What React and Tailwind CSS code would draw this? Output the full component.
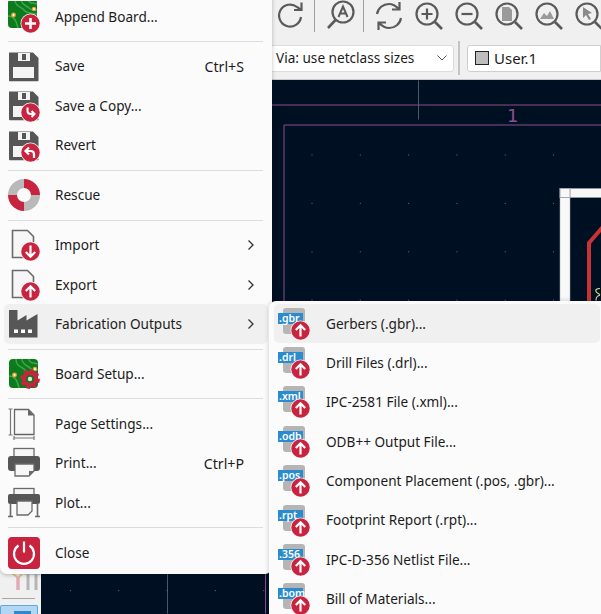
const Badge = ({ kind }) => (
  <g>
    <circle cx="22.5" cy="22.5" r="10" fill="#f4f4f4" />
    <circle cx="22.5" cy="22.5" r="9.2" fill="#c8233f" />
    {kind === "plus" && <path d="M22.5 17v11M17 22.5h11" stroke="#fff" strokeWidth="2.6" fill="none" />}
    {kind === "up" && <path d="M22.5 28.5V17.5M17.8 22l4.7-4.7 4.7 4.7" stroke="#fff" strokeWidth="2.2" fill="none" />}
    {kind === "down" && <path d="M22.5 16.5v11M17.8 23l4.7 4.7 4.7-4.7" stroke="#fff" strokeWidth="2.2" fill="none" />}
    {kind === "copy" && <path d="M19.5 17.5v3.5c0 2.5 1.5 3 3.5 3h3M23.5 21l3 3-3 3" stroke="#fff" strokeWidth="2.1" fill="none" />}
    {kind === "revert" && <path d="M26 28v-4c0-2.5-1.5-3-3.5-3H18M21 17.5 17.5 21l3.5 3.5" stroke="#fff" strokeWidth="2.2" fill="none" />}
  </g>
);

const Icon = ({ children }) => (
  <svg width="32" height="32" viewBox="0 0 32 32" className="shrink-0 overflow-hidden">
    {children}
  </svg>
);

const Floppy = () => (
  <>
    <path d="M1 1.5h24l5.5 5.5v22.5a.8.8 0 0 1-.8.8H1.8a.8.8 0 0 1-.8-.8z" fill="#565656" />
    <rect x="5" y="16" width="21" height="11" fill="#f4f4f4" />
    <rect x="10" y="2" width="12" height="8" fill="#f4f4f4" />
    <rect x="14" y="3" width="4" height="6" fill="#565656" />
  </>
);

const Pcb = ({ y = 0, x = 0 }) => (
  <g transform={`translate(${x} ${y})`}>
    <rect x="0" y="0" width="29" height="29" rx="4" fill="#0d7a1e" />
    <path d="M7 0c0 8 6 7 9 11s8 3 13 4M13 0c0 6 5 6 8 9s5 2 8 2M20 0c0 4 4 4 9 5" stroke="#39a845" strokeWidth="1.5" fill="none" />
    <path d="M0 17c6 0 8 4 10 12" stroke="#39a845" strokeWidth="1.5" fill="none" />
    <circle cx="5.5" cy="16" r="2.4" fill="#f2a33a" />
    <circle cx="5.5" cy="16" r="1" fill="#fff" />
    <circle cx="26" cy="10" r="2.2" fill="#f2a33a" />
    <circle cx="26" cy="10" r="0.9" fill="#fff" />
  </g>
);

const Doc = () => (
  <path d="M4.5 1.5h15l6 6v21h-21z" fill="#f6f6f6" stroke="#6a6a6a" strokeWidth="1.6" />
);

const AppendIcon = () => (
  <Icon>
    <Pcb x={0} y={-2} />
    <Badge kind="plus" />
  </Icon>
);
const SaveIcon = () => <Icon><Floppy /></Icon>;
const SaveCopyIcon = () => <Icon><Floppy /><Badge kind="copy" /></Icon>;
const RevertIcon = () => <Icon><Floppy /><Badge kind="revert" /></Icon>;
const RescueIcon = () => (
  <Icon>
    <path d="M16 0a16 16 0 0 0-16 16h9a7 7 0 0 1 7-7z" fill="#b9b9b9" />
    <path d="M16 0a16 16 0 0 1 16 16h-9a7 7 0 0 0-7-7z" fill="#c8233f" />
    <path d="M0 16a16 16 0 0 0 16 16v-9a7 7 0 0 1-7-7z" fill="#c8233f" />
    <path d="M32 16a16 16 0 0 1-16 16v-9a7 7 0 0 0 7-7z" fill="#b9b9b9" />
  </Icon>
);
const ImportIcon = () => <Icon><Doc /><Badge kind="down" /></Icon>;
const ExportIcon = () => <Icon><Doc /><Badge kind="up" /></Icon>;
const FactoryIcon = () => (
  <Icon>
    <path d="M1 2h8.500v10.500l9-5.500v5.500l11-6.500V29.500H1z" fill="#565656" />
    <rect x="6" y="21.500" width="4" height="3.500" fill="#fff" />
    <rect x="13" y="21.500" width="4" height="3.500" fill="#fff" />
    <rect x="20" y="21.500" width="4" height="3.500" fill="#fff" />
  </Icon>
);
const BoardIcon = () => (
  <Icon>
    <Pcb x={1} y={1} />
    <circle cx="22" cy="21" r="6" fill="none" stroke="#c8233f" strokeWidth="4" />
    <circle cx="22" cy="21" r="8.500" fill="none" stroke="#c8233f" strokeWidth="2.800" strokeDasharray="3.600 3" />
    <circle cx="22" cy="21" r="2.200" fill="#e8e8d0" />
  </Icon>
);
const PageIcon = () => (
  <Icon>
    <path d="M6.500 1.500h14l5.500 5.500v19.500H6.500z" fill="#f8f8f8" stroke="#666" strokeWidth="1.300" />
    <path d="M20 1.500l6 6h-6z" fill="#666" />
    <path d="M2.500 1v26M.5 1h4M.5 27h4M6 30h20M6 28v4M26 28v4" stroke="#777" strokeWidth="1.200" fill="none" />
  </Icon>
);
const PrintIcon = () => (
  <Icon>
    <rect x="6" y="1.500" width="20" height="10" fill="#f6f6f6" stroke="#6a6a6a" strokeWidth="1.300" />
    <rect x="0" y="9" width="32" height="15" rx="3" fill="#565656" />
    <path d="M7 17h19v7l-5 5H7z" fill="#f6f6f6" stroke="#6a6a6a" strokeWidth="1.300" />
    <path d="M21 29v-5h5z" fill="#6a6a6a" />
  </Icon>
);
const PlotIcon = () => (
  <Icon>
    <rect x="6" y="1.500" width="20" height="8" fill="#f6f6f6" stroke="#6a6a6a" strokeWidth="1.300" />
    <rect x="0" y="7" width="32" height="10" rx="2" fill="#565656" />
    <path d="M2.500 16v13M29.500 16v13M0 29.500h5M27 29.500h5" stroke="#6a6a6a" strokeWidth="1.600" fill="none" />
    <path d="M9 14h15v10l-4 4H9z" fill="#f6f6f6" stroke="#6a6a6a" strokeWidth="1.300" />
  </Icon>
);
const CloseIcon = () => (
  <Icon>
    <rect x="0" y="0" width="32" height="32" rx="4" fill="#c8233f" />
    <path d="M10.500 8.500a10 10 0 1 0 11 0" fill="none" stroke="#fff" strokeWidth="2.200" />
    <path d="M16 4.500v11" stroke="#fff" strokeWidth="2.200" />
  </Icon>
);

const FileIcon = ({ ext }) => (
  <Icon>
    <rect x="5" y="0" width="22" height="26" rx="3" fill="#b5b5b5" />
    <rect x="0" y="5" width="25" height="11" fill="#2a8bcf" />
    <text x="1" y="14" fill="#fff" fontSize="10.500" fontWeight="600" fontFamily="'Noto Sans', sans-serif">{ext}</text>
    <Badge kind="up" />
  </Icon>
);

const Chevron = () => (
  <svg width="8" height="12" viewBox="0 0 8 12" className="ml-auto mr-[13px] shrink-0">
    <path d="M1.500 1.500 6 6l-4.500 4.500" stroke="#333" strokeWidth="1.300" fill="none" />
  </svg>
);

const fileMenu = [
  { icon: AppendIcon, label: "Append Board..." },
  { sep: true },
  { icon: SaveIcon, label: "Save", keys: "Ctrl+S" },
  { icon: SaveCopyIcon, label: "Save a Copy..." },
  { icon: RevertIcon, label: "Revert" },
  { sep: true },
  { icon: RescueIcon, label: "Rescue" },
  { sep: true },
  { icon: ImportIcon, label: "Import", more: true },
  { icon: ExportIcon, label: "Export", more: true },
  { icon: FactoryIcon, label: "Fabrication Outputs", more: true, active: true },
  { sep: true },
  { icon: BoardIcon, label: "Board Setup..." },
  { sep: true },
  { icon: PageIcon, label: "Page Settings..." },
  { icon: PrintIcon, label: "Print...", keys: "Ctrl+P" },
  { icon: PlotIcon, label: "Plot..." },
  { sep: true },
  { icon: CloseIcon, label: "Close" },
];

const fabOutputs = [
  { ext: ".gbr", label: "Gerbers (.gbr)...", active: true },
  { ext: ".drl", label: "Drill Files (.drl)..." },
  { ext: ".xml", label: "IPC-2581 File (.xml)..." },
  { ext: ".odb", label: "ODB++ Output File..." },
  { ext: ".pos", label: "Component Placement (.pos, .gbr)..." },
  { ext: ".rpt", label: "Footprint Report (.rpt)..." },
  { ext: ".356", label: "IPC-D-356 Netlist File..." },
  { ext: ".bom", label: "Bill of Materials..." },
];

const ToolIcon = ({ children }) => (
  <div className="w-[40px] flex justify-center shrink-0">
    <svg width="32" height="32" viewBox="0 0 32 32" fill="none" stroke="#5a5a5a" strokeWidth="2.200">
      {children}
    </svg>
  </div>
);

const Lens = ({ children }) => (
  <>
    <circle cx="14" cy="14" r="10.500" />
    <path d="M22 22l7 7" strokeWidth="2.600" />
    {children}
  </>
);

const gridX = [0, 1, 2, 3, 4, 5, 6, 7, 8, 9, 10, 11];
const gridY = [0, 1, 2, 3, 4, 5, 6, 7, 8, 9];

function Canvas() {
  return (
    <svg viewBox="41 81 560 533" className="block w-full h-full" fill="none">
      <path d="M418.500 81v39M167.500 574v40" stroke="#4d5765" />
      <path d="M601 105.500H265.500V614" stroke="#8b4f8e" />
      <path d="M601 125.500H284V614" stroke="#8b4f8e" />
      <text x="507" y="122" fill="#8b4f8e" fontSize="18" fontFamily="'DejaVu Sans', sans-serif">1</text>
      {gridY.map((r) =>
        gridX.map((c) => (
          <rect key={`${r}-${c}`} x={70 + c * 48.3} y={155 + r * 48.4} width="1" height="1" fill="#66707c" />
        ))
      )}
      <rect x="560" y="189" width="10" height="200" fill="#f8f8f8" stroke="#a8a8a8" strokeWidth="0.500" />
      <rect x="570" y="189" width="40" height="9" fill="#f8f8f8" stroke="#a8a8a8" strokeWidth="0.500" />
      <rect x="560" y="189" width="10" height="9" fill="#f8f8f8" stroke="#a8a8a8" />
      <path d="M589 320V243.500L604 226" stroke="#c83434" strokeWidth="4" />
      <path d="M600 289c-3 0-5 1-4 3s3 2 4 3M600 296c-3 0-4 2-4 5" stroke="#dede88" strokeWidth="1.100" />
    </svg>
  );
}

export default function App() {
  return (
    <div className="relative w-[601px] h-[614px] overflow-hidden bg-[#f0f0f0] flex flex-col font-['Noto_Sans',sans-serif] text-[13.600px] text-[#1c1c1c]">
      {/* main toolbar */}
      <div className="flex items-center h-[32px] pl-[271px] shrink-0">
        <ToolIcon>
          <path d="M26 17a11 11 0 1 1-4-10l4 3M26.500 2.500V10H19" />
        </ToolIcon>
        <div className="w-px h-[32px] bg-[#a0a0a0] ml-[3px] shrink-0" />
        <div className="ml-[6px]">
          <ToolIcon>
            <circle cx="18" cy="12" r="10.500" />
            <path d="M10.500 20 3 28" strokeWidth="2.600" />
            <path d="M13.500 17 18 6.500 22.500 17M15 13.500h6" strokeWidth="2" />
          </ToolIcon>
        </div>
        <div className="w-px h-[32px] bg-[#a0a0a0] ml-[2px] shrink-0" />
        <div className="ml-[5px]">
          <ToolIcon>
            <path d="M4 14C5 8 10 4 16 4c4 0 7 2 10 5M26.500 2v7.500H19M28 18c-1 6-6 10-12 10-4 0-7-2-10-5M5.500 30v-7.500H13" />
          </ToolIcon>
        </div>
        <ToolIcon>
          <Lens><path d="M14 8.500v11M8.500 14h11" /></Lens>
        </ToolIcon>
        <ToolIcon>
          <Lens><path d="M8.500 14h11" /></Lens>
        </ToolIcon>
        <ToolIcon>
          <Lens><path d="M9 7h7l3 3v11H9z" fill="#9a9a9a" stroke="none" /></Lens>
        </ToolIcon>
        <ToolIcon>
          <Lens><path d="M7 19l4-6 3 3 3-5 4 8z" fill="#9a9a9a" stroke="none" /></Lens>
        </ToolIcon>
        <ToolIcon>
          <Lens><path d="M10 7l9 6-4 1 3 5-2 1-3-5-3 3z" fill="#8a8a8a" stroke="none" /></Lens>
        </ToolIcon>
      </div>

      {/* track / via / layer selectors */}
      <div className="flex items-center h-[48px] shrink-0 border-b border-[#c8c8c8] pt-[5px]">
        <div className="ml-[260px] w-[194px] h-[27px] bg-white border border-[#dcdcdc] rounded-[3px] flex items-center pl-[15px] shrink-0">
          <span className="whitespace-nowrap">Via: use netclass sizes</span>
          <svg width="10" height="6" viewBox="0 0 10 6" className="ml-auto mr-[6px]">
            <path d="M.5.500 5 5 9.500.500" stroke="#555" fill="none" />
          </svg>
        </div>
        <div className="ml-[4px] w-[2px] h-[34px] bg-[#c4c4c4] shrink-0" />
        <div className="ml-[7px] flex-1 h-[27px] bg-white border border-[#cfcfcf] rounded-l-[3px] flex items-center pl-[7px]">
          <div className="w-[14px] h-[14px] bg-[#bdbdbd] border border-[#222] shrink-0" />
          <span className="ml-[5px] text-[15px]">User.1</span>
        </div>
      </div>

      {/* canvas with left toolbar */}
      <div className="flex flex-1 min-h-0">
        <div className="w-[41px] shrink-0 flex flex-col justify-end bg-[#f0f0f0]">
          <svg width="36" height="18" viewBox="0 0 36 18" className="ml-[6px]">
            <path d="M6 0l6 5 5-5" stroke="#e8c27a" strokeWidth="2" fill="none" />
            <path d="M12 4v13" stroke="#e3aab4" strokeWidth="3.500" />
            <path d="M18 1h16" stroke="#b8d2e8" strokeWidth="2" />
            <path d="M22 1v16M30 1v16" stroke="#b5b5b5" strokeWidth="3" />
          </svg>
          <div className="h-[1px] w-[33px] bg-[#a8a8a8] ml-[2px] mt-[7px]" />
          <div className="mt-[6px] ml-0 w-[38px] h-[9px] bg-[#b4d6f2] border border-[#5aa9e2] border-b-0 rounded-t-[2px] flex justify-center items-start pt-[5px]">
            <div className="w-[17px] h-[3px] bg-[#2a8bcf] ml-[6px]" />
          </div>
        </div>
        <div className="flex-1 min-w-0 bg-[#001023]">
          <Canvas />
        </div>
      </div>

      {/* File menu */}
      <div className="absolute left-0 top-[-3px] w-[272px] h-[577px] bg-[#fbfbfb] rounded-b-[7px] shadow-[0_1px_4px_rgba(0,0,0,0.25)] px-1 flex flex-col">
        {fileMenu.map((item, i) =>
          item.sep ? (
            <div key={i} className="h-[10.330px] flex items-center shrink-0 pl-1 pr-[5px]">
              <div className="h-px w-full bg-[#dcdcdc]" />
            </div>
          ) : (
            <div
              key={i}
              className={`h-[39.500px] flex items-center pl-1 rounded-[5px] shrink-0 ${item.active ? "bg-[#f0f0f0]" : ""}`}
            >
              <item.icon />
              <span className="ml-[15px] whitespace-nowrap">{item.label}</span>
              {item.keys && <span className="ml-auto mr-[24px] text-[14.200px]">{item.keys}</span>}
              {item.more && <Chevron />}
            </div>
          )
        )}
      </div>

      {/* Fabrication Outputs submenu */}
      <div className="absolute left-[269px] top-[301px] w-[340px] h-[330px] bg-[#fbfbfb] rounded-tl-[7px] shadow-[0_0_5px_rgba(0,0,0,0.2)] pt-[3px] pl-[5px] pr-[9px] flex flex-col">
        {fabOutputs.map((item) => (
          <div
            key={item.ext}
            className={`h-[39.400px] flex items-center pl-1 rounded-[5px] shrink-0 ${item.active ? "bg-[#f0f0f0]" : ""}`}
          >
            <FileIcon ext={item.ext} />
            <span className="ml-4 whitespace-nowrap">{item.label}</span>
          </div>
        ))}
      </div>
    </div>
  );
}
